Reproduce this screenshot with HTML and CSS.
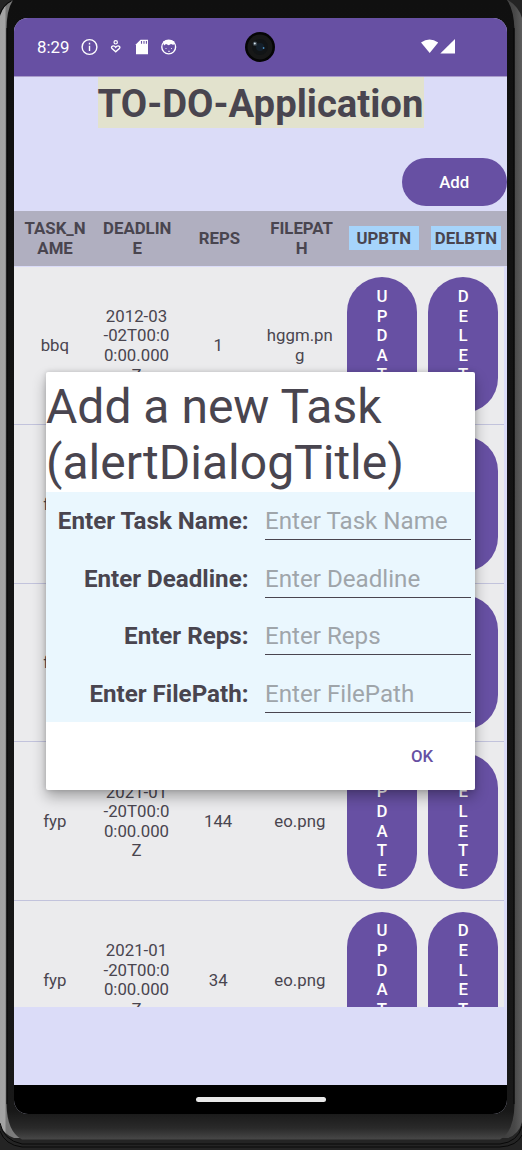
FILE: index.html
```html
<!DOCTYPE html>
<html lang="en">
<head>
<meta charset="utf-8">
<title>TO-DO-Application</title>
<link rel="stylesheet" href="styles.css">
</head>
<body>
<div class="device">
  <svg class="frame" width="522" height="1150" viewBox="0 0 522 1150" aria-hidden="true">
    <defs>
      <linearGradient id="metalL" x1="0" x2="1" y1="0" y2="0"><stop offset="0" stop-color="#a2a2a2"/><stop offset=".15" stop-color="#a4a4a4"/><stop offset=".22" stop-color="#777"/><stop offset="1" stop-color="#888"/></linearGradient>
      <linearGradient id="metalR" x1="0" x2="1" y1="0" y2="0"><stop offset="0" stop-color="#3c3c3c"/><stop offset=".65" stop-color="#484848"/><stop offset="1" stop-color="#5c5c5c"/></linearGradient>
      <linearGradient id="bezel" x1="0" x2="0" y1="0" y2="1"><stop offset="0" stop-color="#101010"/><stop offset=".975" stop-color="#181818"/><stop offset=".99" stop-color="#2a2a2a"/><stop offset="1" stop-color="#484848"/></linearGradient>
    </defs>
    <rect width="522" height="1150" fill="#242424"/>
    <path d="M0 16Q3 5 14 0H30V1138H14Q3 1134 0 1124Z" fill="url(#metalL)"/>
    <path d="M508 0Q519 7 522 18V1122Q519 1134 508 1138H500V0Z" fill="url(#metalR)"/>
    <path d="M0 14Q3 5 11 1M0 1123Q3 1140 22 1144H500Q518 1142 522 1126M0 1131Q5 1145 22 1147H500Q517 1146 522 1135" fill="none" stroke="#080808"/>
    <path d="M13 0Q6.500 10 6.500 30V1104Q7 1132 22 1139.500H500Q514 1132 514.500 1104V30Q514 10 507 0Z" fill="url(#bezel)"/>
    <path d="M7 28V1104M514 28V1104" stroke="#050505"/>
  </svg>
  <main class="screen">
    <header class="status">
      <span class="clock">8:29</span>
      <svg class="status-left" width="98" height="18" viewBox="0 0 98 18" fill="none" stroke="#fff" stroke-width="1.400">
        <circle cx="9.500" cy="9" r="7.400"/><path d="M9.500 7.800V13M9.500 4.800V6.400"/>
        <circle cx="35.700" cy="4.300" r="1.700" stroke-width="1.200"/>
        <path d="M35.700 13.800L31.800 10.200C30.600 8.500 33.500 6.600 35.700 9.300C37.900 6.600 40.800 8.500 39.600 10.200Z" stroke-width="1.400"/>
        <path d="M56 6.200L60.500 1.800H68V16.200H56Z" fill="#fff" stroke="none"/>
        <path d="M61.500 3V5.700M64 3V5.700M66.400 3V5.700" stroke="#6750a3" stroke-width="1.100"/>
        <circle cx="88.700" cy="9" r="6.900"/><path d="M83 3.500L85.500 2.500L88.700 2L92 2.500L94.500 3.500L93.500 7L91 6L88.700 7.200L86 6L84 7.500Z" fill="#fff" stroke="none"/>
        <path d="M86 10V11M91.500 10V11M88 13.300H90" stroke-width=".8"/>
      </svg>
      <svg class="status-right" width="36" height="18" viewBox="0 0 36 18" fill="#fff"><path d="M1 4.500Q9.500-1.700 18.200 4.500L9.700 15Z"/><path d="M20.300 15.500L35 1V15.500Z"/></svg>
      <svg class="camera" width="32" height="32" viewBox="0 0 32 32"><circle cx="16" cy="16" r="15" fill="#050505"/><circle cx="16" cy="16" r="12.500" fill="#171818"/><circle cx="16" cy="16" r="8" fill="#111416"/><circle cx="16" cy="16" r="4" fill="#14202b"/><circle cx="11" cy="12.700" r="2.300" fill="#39434b"/><circle cx="10.800" cy="12.600" r="1" fill="#d8e7f0"/><circle cx="19.600" cy="17" r=".9" fill="#4b8cc0"/></svg>
    </header>
    <div class="title-row"><h1 class="app-title">TO-DO-Application</h1></div>
    <div class="toolbar"><button class="add">Add</button></div>
    <div class="table-head">
      <span>TASK_N<br>AME</span><span>DEADLIN<br>E</span><span>REPS</span><span>FILEPAT<br>H</span><span class="chip">UPBTN</span><span class="chip">DELBTN</span>
    </div>
    <section class="rows">
      <div class="row"><span>bbq</span><span>2012-03<br>-02T00:0<br>0:00.000<br>Z</span><span>1</span><span>hggm.pn<br>g</span><button class="pill">U<br>P<br>D<br>A<br>T<br>E</button><button class="pill">D<br>E<br>L<br>E<br>T<br>E</button></div>
      <div class="row"><span>fyp</span><span></span><span></span><span></span><button class="pill">U<br>P<br>D<br>A<br>T<br>E</button><button class="pill">D<br>E<br>L<br>E<br>T<br>E</button></div>
      <div class="row"><span>fyp</span><span></span><span></span><span></span><button class="pill">U<br>P<br>D<br>A<br>T<br>E</button><button class="pill">D<br>E<br>L<br>E<br>T<br>E</button></div>
      <div class="row"><span>fyp</span><span>2021-01<br>-20T00:0<br>0:00.000<br>Z</span><span>144</span><span>eo.png</span><button class="pill">U<br>P<br>D<br>A<br>T<br>E</button><button class="pill">D<br>E<br>L<br>E<br>T<br>E</button></div>
      <div class="row"><span>fyp</span><span>2021-01<br>-20T00:0<br>0:00.000<br>Z</span><span>34</span><span>eo.png</span><button class="pill">U<br>P<br>D<br>A<br>T<br>E</button><button class="pill">D<br>E<br>L<br>E<br>T<br>E</button></div>
    </section>
    <footer class="nav"><span class="handle"></span></footer>
  </main>
  <div class="dialog" role="dialog">
    <h2 class="dialog-title">Add a new Task<br>(alertDialogTitle)</h2>
    <form class="form">
      <label class="field"><span>Enter Task Name:</span><input placeholder="Enter Task Name"></label>
      <label class="field"><span>Enter Deadline:</span><input placeholder="Enter Deadline"></label>
      <label class="field"><span>Enter Reps:</span><input placeholder="Enter Reps"></label>
      <label class="field"><span>Enter FilePath:</span><input placeholder="Enter FilePath"></label>
    </form>
    <div class="actions"><button class="ok">OK</button></div>
  </div>
</div>
</body>
</html>
```
FILE: styles.css
```css
* { box-sizing: border-box; }
body { margin: 0; color: #49454f; font-family: Roboto, sans-serif; font-size: 16.8px; }
button, input { font: inherit; border: 0; margin: 0; padding: 0; }
.device { position: relative; width: 522px; height: 1150px; padding: 18px 15px 0 14px; overflow: hidden; }
.frame { position: absolute; left: 0; top: 0; }
.screen { position: relative; display: flex; flex-direction: column; width: 493px; height: 1096px; border-radius: 14px; overflow: hidden; background: #dbdcf8; }
.status { position: relative; flex: none; height: 58.500px; display: flex; align-items: center; padding: 1px 51px 0 23px; background: #6750a3; border-bottom: 1px solid #a99ccb; color: #fff; }
.clock { width: 43px; font-size: 16.800px; }
.status-right { margin-left: auto; }
.camera { position: absolute; left: 230px; top: 13px; }
.title-row { flex: none; display: flex; justify-content: center; height: 81.500px; }
.app-title { margin: 0; width: 326px; height: 51px; line-height: 54px; background: #e2e2cd; font-size: 38.250px; font-weight: 700; text-align: center; white-space: nowrap; }
.toolbar { flex: none; height: 53px; display: flex; justify-content: flex-end; }
.add { width: 105.500px; height: 48px; border-radius: 24px; background: #6750a3; color: #fff; font-weight: 500; }
.table-head { flex: none; display: grid; grid-template-columns: repeat(6, 1fr); align-items: center; justify-items: center; height: 54.500px; padding-top: 1px; background: #b0afc0; text-align: center; font-weight: 700; line-height: 19.600px; }
.table-head span:nth-child(3) { padding-top: 1px; }
.chip { width: 70px; height: 23.500px; margin-top: -2px; line-height: 24.500px; background: #a6d4fb; }
.rows { flex: none; height: 741.500px; width: 490px; padding-top: 1px; overflow: hidden; }
.row { display: grid; grid-template-columns: repeat(6, 1fr); align-items: center; justify-items: center; height: 158.600px; border-bottom: 1.500px solid #c2c3dc; background: #ebebed; text-align: center; line-height: 19.600px; }
.row span { padding-top: 1.500px; }
.pill { width: 70px; height: 135.700px; padding-top: 1px; border-radius: 35px; background: #6750a3; color: #fff; font-weight: 500; line-height: 19.600px; }
.pill:nth-child(5) { margin-left: 1px; }
.nav { margin-top: auto; height: 29px; background: #000; display: flex; align-items: center; justify-content: center; }
.handle { width: 130px; height: 5px; border-radius: 2.500px; background: #e8e8e8; }
.dialog { position: absolute; left: 46px; top: 372px; width: 429px; height: 418px; display: flex; flex-direction: column; background: #fff; border-radius: 2px; box-shadow: 0 7px 14px rgba(0,0,0,.3), 0 0 5px rgba(0,0,0,.16); }
.dialog-title { margin: 0; height: 120px; padding: 7px 0 0; font-size: 48px; line-height: 56.250px; font-weight: 400; white-space: nowrap; }
.form { height: 230px; margin: 0; background: #eaf7fe; font-size: 24.150px; }
.field { display: flex; height: 57.600px; }
.field span { width: 202.500px; margin-right: 16.500px; text-align: right; font-weight: 700; line-height: 58.500px; white-space: nowrap; }
.field input { width: 205.500px; height: 48px; padding-top: 11px; background: transparent; border-bottom: 1px solid #49454f; border-radius: 0; }
.field input::placeholder { color: #9fa5aa; opacity: 1; }
.actions { flex: 1; display: flex; justify-content: flex-end; align-items: center; padding-right: 24px; }
.ok { width: 58px; height: 48px; background: none; color: #6750a3; font-weight: 500; }
```
